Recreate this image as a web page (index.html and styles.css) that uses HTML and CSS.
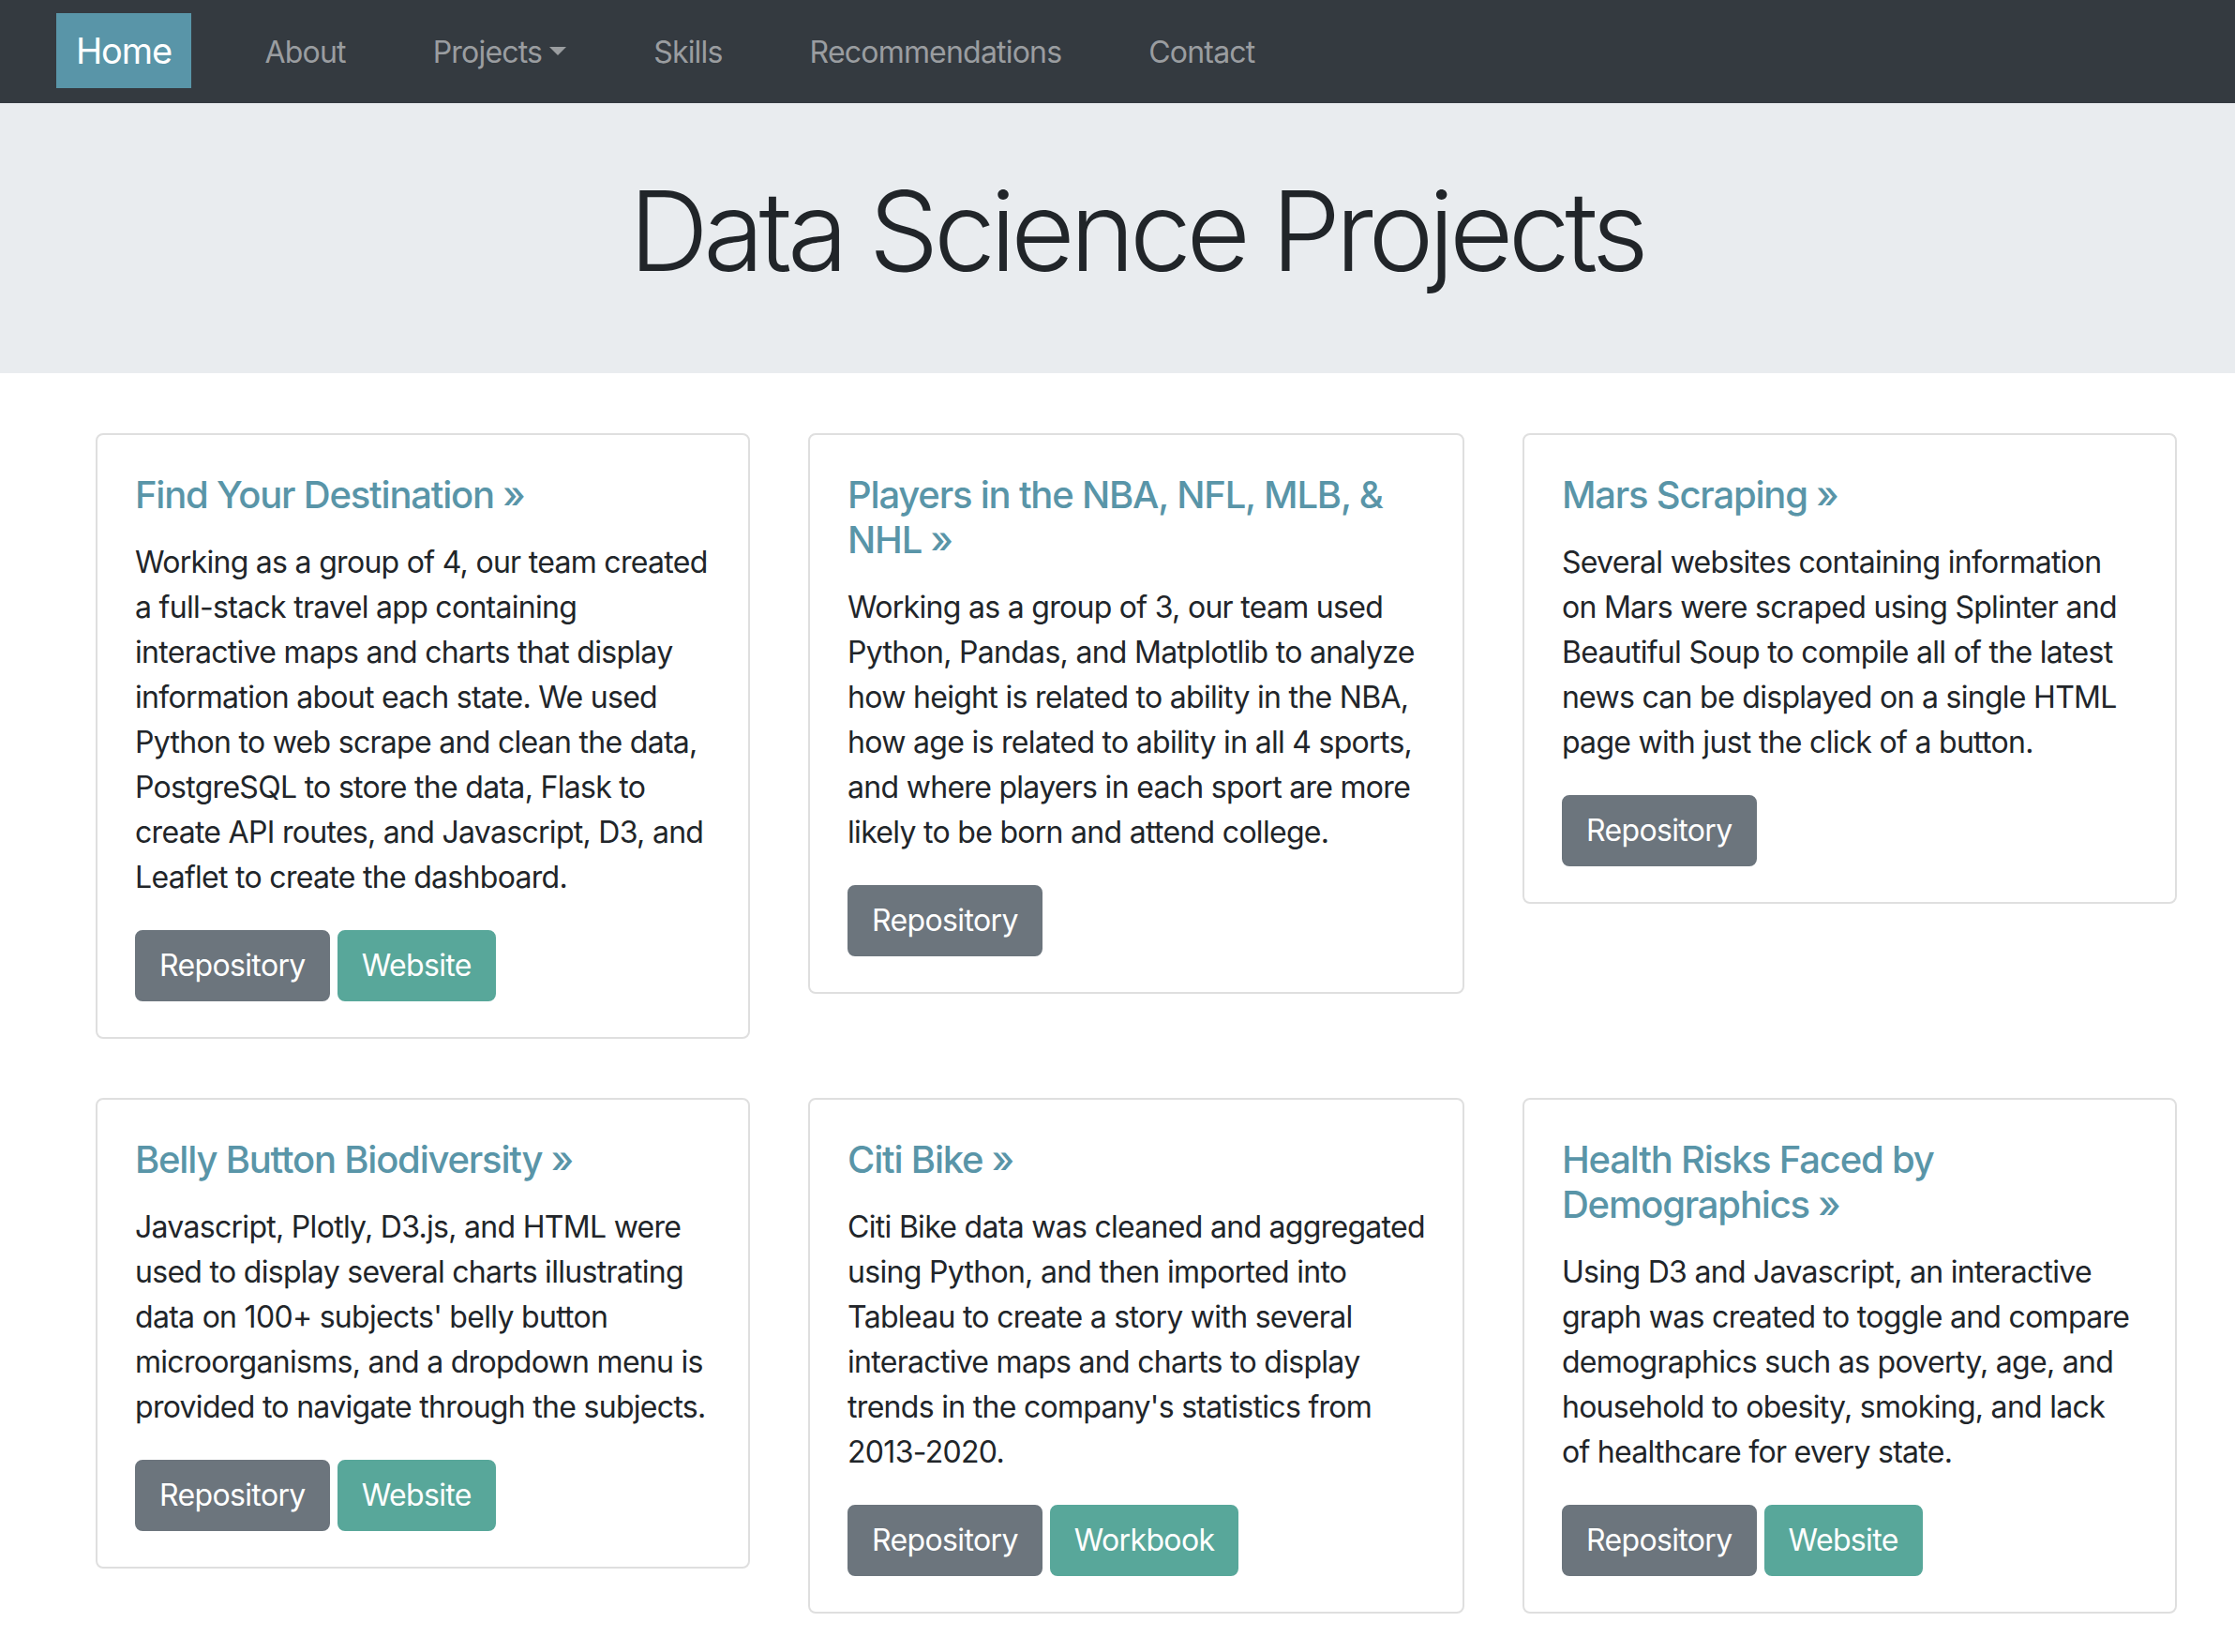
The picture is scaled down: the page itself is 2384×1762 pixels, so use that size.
FILE: index.html
```html
<!DOCTYPE html>
<html lang="en">
<head>
<meta charset="utf-8">
<title>Data Science Projects</title>
<link rel="stylesheet" href="styles.css">
</head>
<body>
<nav class="navbar">
  <a class="brand" href="#">Home</a>
  <ul class="nav-list">
    <li><a class="nav-link" href="#">About</a></li>
    <li><a class="nav-link dropdown-toggle" href="#">Projects</a></li>
    <li><a class="nav-link" href="#">Skills</a></li>
    <li><a class="nav-link" href="#">Recommendations</a></li>
    <li><a class="nav-link" href="#">Contact</a></li>
  </ul>
</nav>

<header class="jumbotron">
  <div class="container">
    <h1 class="display-title">Data Science Projects</h1>
  </div>
</header>

<main class="container">
  <div class="card-grid">
    <div class="card">
      <h5 class="card-title"><a href="#">Find Your Destination &raquo;</a></h5>
      <p class="card-text">Working as a group of 4, our team created<br>a full-stack travel app containing<br>interactive maps and charts that display<br>information about each state. We used<br>Python to web scrape and clean the data,<br>PostgreSQL to store the data, Flask to<br>create API routes, and Javascript, D3, and<br>Leaflet to create the dashboard.</p>
      <div class="btn-row">
        <a class="btn btn-secondary" href="#">Repository</a>
        <a class="btn btn-teal" href="#">Website</a>
      </div>
    </div>
    <div class="card">
      <h5 class="card-title"><a href="#">Players in the NBA, NFL, MLB, &amp;<br>NHL &raquo;</a></h5>
      <p class="card-text">Working as a group of 3, our team used<br>Python, Pandas, and Matplotlib to analyze<br>how height is related to ability in the NBA,<br>how age is related to ability in all 4 sports,<br>and where players in each sport are more<br>likely to be born and attend college.</p>
      <div class="btn-row">
        <a class="btn btn-secondary" href="#">Repository</a>
      </div>
    </div>
    <div class="card">
      <h5 class="card-title"><a href="#">Mars Scraping &raquo;</a></h5>
      <p class="card-text">Several websites containing information<br>on Mars were scraped using Splinter and<br>Beautiful Soup to compile all of the latest<br>news can be displayed on a single HTML<br>page with just the click of a button.</p>
      <div class="btn-row">
        <a class="btn btn-secondary" href="#">Repository</a>
      </div>
    </div>
    <div class="card">
      <h5 class="card-title"><a href="#">Belly Button Biodiversity &raquo;</a></h5>
      <p class="card-text">Javascript, Plotly, D3.js, and HTML were<br>used to display several charts illustrating<br>data on 100+ subjects' belly button<br>microorganisms, and a dropdown menu is<br>provided to navigate through the subjects.</p>
      <div class="btn-row">
        <a class="btn btn-secondary" href="#">Repository</a>
        <a class="btn btn-teal" href="#">Website</a>
      </div>
    </div>
    <div class="card">
      <h5 class="card-title"><a href="#">Citi Bike &raquo;</a></h5>
      <p class="card-text">Citi Bike data was cleaned and aggregated<br>using Python, and then imported into<br>Tableau to create a story with several<br>interactive maps and charts to display<br>trends in the company's statistics from<br>2013-2020.</p>
      <div class="btn-row">
        <a class="btn btn-secondary" href="#">Repository</a>
        <a class="btn btn-teal" href="#">Workbook</a>
      </div>
    </div>
    <div class="card">
      <h5 class="card-title"><a href="#">Health Risks Faced by<br>Demographics &raquo;</a></h5>
      <p class="card-text">Using D3 and Javascript, an interactive<br>graph was created to toggle and compare<br>demographics such as poverty, age, and<br>household to obesity, smoking, and lack<br>of healthcare for every state.</p>
      <div class="btn-row">
        <a class="btn btn-secondary" href="#">Repository</a>
        <a class="btn btn-teal" href="#">Website</a>
      </div>
    </div>
  </div>
</main>
</body>
</html>
```

FILE: styles.css
```css
* {
  box-sizing: border-box;
}

html, body {
  margin: 0;
  padding: 0;
}

body {
  font-family: Inter, "Noto Sans", "Liberation Sans", sans-serif;
  font-size: 32px;
  line-height: 1.5;
  color: #212529;
  background: #ffffff;
}

a {
  text-decoration: none;
}

/* ---------- navbar ---------- */
.navbar {
  display: flex;
  align-items: center;
  height: 110px;
  padding: 0 0 2px 60px;
  background: #343a40;
}

.brand {
  display: block;
  padding: 10px 21px;
  margin-right: 32px;
  font-size: 38px;
  letter-spacing: -0.03em;
  line-height: 60px;
  color: #ffffff;
  background: #5995a8;
}

.nav-list {
  display: flex;
  margin: 0;
  padding: 0;
  list-style: none;
}

.nav-link {
  display: block;
  padding: 18px 46.5px 14px;
  line-height: 48px;
  letter-spacing: -0.025em;
  color: #9a9da0;
}

.dropdown-toggle::after {
  content: "";
  display: inline-block;
  margin-left: 8px;
  vertical-align: 8px;
  border-top: 9.6px solid;
  border-right: 9.6px solid transparent;
  border-left: 9.6px solid transparent;
  border-bottom: 0;
}

/* ---------- jumbotron ---------- */
.jumbotron {
  padding: 66px 0 80px;
  margin-bottom: 64px;
  background: #e9ecef;
}

.container {
  width: 2220px;
  margin-left: 102px;
}

.display-title {
  margin: 0;
  text-align: center;
  font-size: 118px;
  font-weight: 300;
  letter-spacing: -0.047em;
  line-height: 1.2;
  color: #212529;
}

/* ---------- cards ---------- */
.card-grid {
  display: grid;
  grid-template-columns: repeat(3, 1fr);
  column-gap: 62px;
  row-gap: 63px;
  align-items: start;
}

.card {
  padding: 40px 40px 38px;
  border: 2px solid #dfdfdf;
  border-radius: 8px;
  background: #ffffff;
}

.card-title {
  margin: 0 0 24px;
  font-size: 40px;
  font-weight: 500;
  letter-spacing: -0.03em;
  line-height: 1.2;
  white-space: nowrap;
}

.card-title a {
  color: #5995a8;
}

.card-text {
  margin: 0 0 32px;
  letter-spacing: -0.022em;
  white-space: nowrap;
}

.btn-row {
  display: flex;
  gap: 8px;
}

.btn {
  display: inline-block;
  padding: 12px 24px;
  border: 2px solid transparent;
  border-radius: 8px;
  font-size: 32px;
  letter-spacing: -0.02em;
  line-height: 48px;
  color: #ffffff;
}

.btn-secondary {
  background: #6c757d;
  border-color: #6c757d;
}

.btn-teal {
  background: #58a79a;
  border-color: #58a79a;
}
```
